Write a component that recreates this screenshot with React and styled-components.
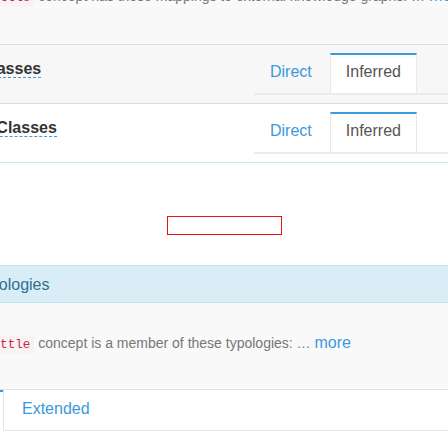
import styled, { createGlobalStyle } from "styled-components";

const GlobalStyle = createGlobalStyle`
  html, body {
    margin: 0;
    padding: 0;
    background: #fff;
  }
  body {
    font-family: "Liberation Sans", Arial, sans-serif;
    font-size: 14px;
    line-height: 20px;
    color: #333;
  }
`;

const Page = styled.div`
  width: 448px;
  height: 448px;
  overflow: hidden;
  background: #fff;
`;

const PanelBody = styled.div`
  background: #f9f9f9;
  padding: 30px 0 ${(p) => p.$tail}px;
  margin-top: ${(p) => p.$pull || 0}px;
`;

const Summary = styled.p`
  margin: 0 0 0 -19px;
  white-space: nowrap;
  color: #777;
`;

const Code = styled.code`
  font-family: "Liberation Mono", "DejaVu Sans Mono", monospace;
  font-size: 12.6px;
  color: #c7254e;
  background: #f9f2f4;
  padding: 2px 4px;
  border-radius: 4px;
`;

const More = styled.a`
  color: #3b99dc;
  font-size: 16px;
  text-decoration: none;
`;

const Section = styled.div`
  display: flex;
  align-items: flex-start;
  justify-content: space-between;
  height: 50px;
  padding-top: 8px;
  background: ${(p) => (p.$shade ? "#f7f7f7" : "#fff")};
  border-top: 1px solid #dcdcdc;
`;

const TitleWrap = styled.div`
  flex: 1;
  min-width: 0;
  padding-top: 5.5px;
`;

const Title = styled.span`
  display: inline-block;
  margin-left: ${(p) => p.$shift}px;
  font-size: 16px;
  font-weight: bold;
  line-height: 16px;
  color: #333;
  white-space: nowrap;
  border-bottom: 1px dashed #3b99dc;
`;

const Nav = styled.ul`
  flex: 0 0 194px;
  display: flex;
  margin: 0;
  padding: 0;
  list-style: none;
  border-bottom: 2px solid #ebebeb;
`;

const Tab = styled.li`
  margin-right: 2px;
  padding: 7px 15px 11px;
  font-size: 16px;
  line-height: 20px;
  white-space: nowrap;
  border: 1px solid ${(p) => (p.$active ? "#e8e8e8" : "transparent")};
  border-top: 2px solid ${(p) => (p.$active ? "#3b99dc" : "transparent")};
  border-bottom: 0;
  background: ${(p) => (p.$active ? "#fff" : "transparent")};
  color: ${(p) => (p.$active ? "#555" : "#3b99dc")};
`;

const Stage = styled.div`
  display: flex;
  justify-content: center;
  padding: 53px 0 30px;
  border-top: 1px solid #c5e8ec;
`;

const Frame = styled.div`
  width: 115px;
  height: 19px;
  box-sizing: border-box;
  border: 1px solid #ee1111;
`;

const PanelHeading = styled.div`
  padding: 9px 0 7px;
  background: #d9edf7;
  border-top: 1px solid #bce8f1;
  border-bottom: 1px solid #bce8f1;
  color: #31708f;
  font-size: 16px;
  line-height: 20px;
  white-space: nowrap;
`;

const HeadingText = styled.span`
  display: inline-block;
  margin-left: ${(p) => p.$shift}px;
`;

const TabStrip = styled.div`
  display: flex;
  align-items: flex-start;
  border-top: 1px solid #e3e3e3;
  margin-bottom: 19px;
`;

const Stub = styled.div`
  width: 3px;
  border-top: 2px solid #3b99dc;
`;

const WideTab = styled.div`
  flex: 1;
  padding: 9px 18px 11px;
  border-left: 1px solid #e6e6e6;
  border-bottom: 1px solid #e6e6e6;
  color: #3b99dc;
  font-size: 16px;
  line-height: 20px;
`;

const Footer = styled.div`
  border-top: 1px solid #ececec;
  height: 20px;
`;

function TabRow({ title, shift, shade }) {
  return (
    <Section $shade={shade}>
      <TitleWrap>
        <Title $shift={shift}>{title}</Title>
      </TitleWrap>
      <Nav>
        <Tab>Direct</Tab>
        <Tab $active>Inferred</Tab>
      </Nav>
    </Section>
  );
}

export default function App() {
  return (
    <Page>
      <GlobalStyle />
      <PanelBody $pull={-44} $tail={36}>
        <Summary>
          <Code>Battle</Code> concept has these mappings to external knowledge
          graphs: … <More>more</More>
        </Summary>
      </PanelBody>

      <TabRow title="Superclasses" shift={-62} shade />
      <TabRow title="Equivalent Classes" shift={-89} />

      <Stage>
        <Frame />
      </Stage>

      <PanelHeading>
        <HeadingText $shift={-27}>Typologies</HeadingText>
      </PanelHeading>
      <PanelBody $tail={34}>
        <Summary>
          <Code>Battle</Code> concept is a member of these typologies: …{" "}
          <More>more</More>
        </Summary>
      </PanelBody>

      <TabStrip>
        <Stub />
        <WideTab>Extended</WideTab>
      </TabStrip>
      <Footer />
    </Page>
  );
}
